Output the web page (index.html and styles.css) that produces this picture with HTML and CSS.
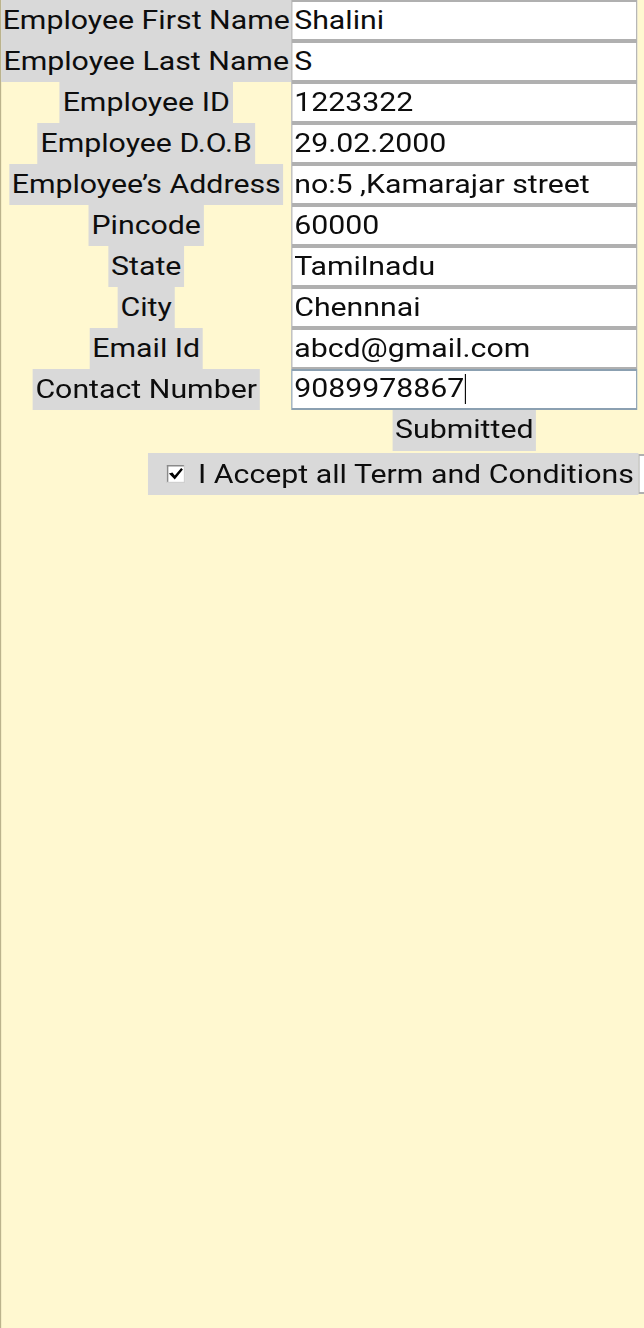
FILE: index.html
```html
<!DOCTYPE html>
<html>
<head>
<meta charset="utf-8">
<title>Employee Form</title>
<link rel="stylesheet" href="styles.css">
</head>
<body>
<div class="page">
  <form class="form">
    <div class="cell label-cell"><label class="lbl">Employee First Name</label></div>
    <div class="cell"><input class="field" type="text" value="Shalini"></div>
    <div class="cell label-cell"><label class="lbl">Employee Last Name</label></div>
    <div class="cell"><input class="field" type="text" value="S"></div>
    <div class="cell label-cell"><label class="lbl">Employee ID</label></div>
    <div class="cell"><input class="field" type="text" value="1223322"></div>
    <div class="cell label-cell"><label class="lbl">Employee D.O.B</label></div>
    <div class="cell"><input class="field" type="text" value="29.02.2000"></div>
    <div class="cell label-cell"><label class="lbl">Employee’s Address</label></div>
    <div class="cell"><input class="field" type="text" value="no:5 ,Kamarajar street"></div>
    <div class="cell label-cell"><label class="lbl">Pincode</label></div>
    <div class="cell"><input class="field" type="text" value="60000"></div>
    <div class="cell label-cell"><label class="lbl">State</label></div>
    <div class="cell"><input class="field" type="text" value="Tamilnadu"></div>
    <div class="cell label-cell"><label class="lbl">City</label></div>
    <div class="cell"><input class="field" type="text" value="Chennnai"></div>
    <div class="cell label-cell"><label class="lbl">Email Id</label></div>
    <div class="cell"><input class="field" type="text" value="abcd@gmail.com"></div>
    <div class="cell label-cell"><label class="lbl">Contact Number</label></div>
    <div class="cell"><div class="field focused">9089978867<span class="caret"></span></div></div>
    <div class="cell"></div>
    <div class="cell submit-cell"><button type="button" class="btn">Submitted</button></div>
  </form>
  <div class="accept-row">
    <label class="accept">
      <svg class="check" width="16" height="18" viewBox="0 0 16 18" preserveAspectRatio="none">
        <rect x="0" y="0" width="16" height="18" fill="#ffffff"/>
        <rect x="0" y="0" width="1.5" height="18" fill="#8a8a8a"/>
        <rect x="0" y="0" width="16" height="1.5" fill="#8a8a8a"/>
        <rect x="14.8" y="0" width="1.2" height="18" fill="#d0d0d0"/>
        <rect x="0" y="16.8" width="16" height="1.2" fill="#d0d0d0"/>
        <path d="M2 8.5 L5 7.5 L7 10.5 L12.5 3 L14 4.5 L7 14.5 Z" fill="#000000"/>
      </svg>
      <span class="accept-text">I Accept all Term and Conditions</span>
    </label>
    <div class="extra-box"></div>
  </div>
</div>
</body>
</html>
```
FILE: styles.css
```css
html, body {
  margin: 0;
  padding: 0;
  background: #fff8d0;
  overflow: hidden;
}
.page {
  width: 553px;
  min-height: 1328px;
  box-sizing: border-box;
  border-left: 1px solid #bbb38c;
  overflow: hidden;
  transform: scaleX(1.165);
  transform-origin: 0 0;
  font-family: Roboto, "Noto Sans", sans-serif;
  font-size: 26px;
  color: #0d0d0d;
}
.form {
  display: grid;
  grid-template-columns: 249px 297px;
  grid-auto-rows: 41px;
  margin: 0;
}
.cell {
  display: flex;
  align-items: stretch;
}
.label-cell {
  justify-content: center;
}
.lbl {
  display: block;
  background: #d9d9d9;
  padding: 0 2.5px 1px;
  line-height: 40px;
  white-space: nowrap;
}
.field {
  box-sizing: border-box;
  width: 100%;
  height: 41px;
  margin: 0;
  border-style: solid;
  border-color: #b0b0b0;
  border-width: 2px 1.7px;
  background: #ffffff;
  padding: 0 1.5px 2px;
  font-family: Roboto, "Noto Sans", sans-serif;
  font-size: 26px;
  color: #0d0d0d;
  line-height: 35px;
  outline: none;
}
.focused {
  border-color: #8ba0b1;
  display: flex;
  align-items: center;
}
.caret {
  display: inline-block;
  width: 1.7px;
  height: 30px;
  background: #0d0d0d;
}
.submit-cell {
  justify-content: center;
}
.btn {
  margin: 0;
  border: none;
  background: #d9d9d9;
  padding: 0 2.5px 3px;
  font-family: Roboto, "Noto Sans", sans-serif;
  font-size: 26px;
  color: #0d0d0d;
  line-height: 38px;
  height: 41px;
}
.accept-row {
  display: flex;
  margin-top: 2px;
  padding-left: 126px;
  height: 42px;
}
.accept {
  display: flex;
  align-items: center;
  background: #d9d9d9;
  width: 421px;
  flex: none;
  box-sizing: border-box;
  padding-left: 15.5px;
}
.check {
  flex: none;
  margin-right: 11.5px;
}
.accept-text {
  white-space: nowrap;
  line-height: 42px;
}
.extra-box {
  flex: none;
  width: 30px;
  height: 36px;
  margin-top: 1px;
  background: #ffffff;
  border-style: solid;
  border-color: #b0b0b0;
  border-width: 2px 1.7px;
}
```
